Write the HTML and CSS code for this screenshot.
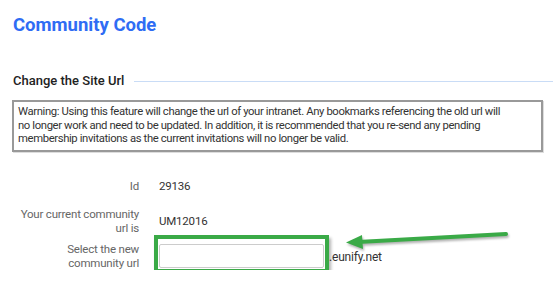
FILE: index.html
```html
<!DOCTYPE html>
<html lang="en">
<head>
    <meta charset="UTF-8">
    <meta name="viewport" content="width=device-width, initial-scale=1.0">
    <title>Community Code</title>
    <link rel="stylesheet" href="styles.css">
</head>
<body>
    <h1 class="page-title">Community Code</h1>

    <section class="site-url">
        <div class="section-head">
            <h2 class="section-title">Change the Site Url</h2>
            <span class="section-rule"></span>
        </div>

        <div class="warning-box">
            Warning: Using this feature will change the url of your intranet. Any bookmarks referencing the old url will<br>
            no longer work and need to be updated. In addition, it is recommended that you re-send any pending<br>
            membership invitations as the current invitations will no longer be valid.
        </div>

        <div class="url-form">
            <div class="form-label">Id</div>
            <div class="form-value">29136</div>

            <div class="form-label">Your current community url is</div>
            <div class="form-value">UM12016</div>

            <div class="form-label">Select the new community url</div>
            <div class="form-value input-row">
                <span class="input-wrap">
                    <input type="text" class="url-input">
                    <span class="highlight-box"></span>
                </span>
                <span class="domain">.eunify.net</span>
                <!-- annotation arrow -->
                <svg class="annotation-arrow" width="170" height="20" viewBox="0 0 170 20">
                    <line x1="14" y1="11" x2="162" y2="3" stroke="#3aaa47" stroke-width="4" stroke-linecap="round"/>
                    <polygon points="2,11.5 18,4 19,18" fill="#3aaa47"/>
                </svg>
            </div>
        </div>
    </section>
</body>
</html>
```

FILE: styles.css
```css
* {
    margin: 0;
    padding: 0;
    box-sizing: border-box;
}

body {
    font-family: Roboto, 'Noto Sans', sans-serif;
    background-color: #fff;
    color: #333;
    padding: 13px 10px 0 12px;
}

.page-title {
    font-size: 18.5px;
    font-weight: 700;
    color: #2f6cf4;
    line-height: 24px;
    padding-left: 1px;
}

.site-url {
    margin-top: 36px;
}

.section-head {
    display: flex;
    align-items: center;
    gap: 10px;
    padding-left: 1px;
    margin-right: -10px;
}

.section-title {
    font-size: 13px;
    font-weight: 500;
    color: #222;
    line-height: 16px;
}

.section-rule {
    flex: 1;
    height: 1px;
    background-color: #c9dcf6;
}

/* Warning panel */
.warning-box {
    margin-top: 11px;
    border: 2px solid #999;
    box-shadow: 1px 1px 0 #ddd;
    padding: 3px 2px 4px 4px;
    font-size: 11.3px;
    letter-spacing: -0.38px;
    line-height: 13.5px;
    color: #333;
    white-space: nowrap;
}

/* Form rows */
.url-form {
    display: grid;
    grid-template-columns: 127px 1fr;
    column-gap: 20px;
    row-gap: 7px;
    margin-top: 20px;
    align-items: center;
}

.form-label {
    font-size: 11.5px;
    letter-spacing: -0.2px;
    line-height: 14px;
    color: #666;
    text-align: right;
    padding-left: 8px;
}

.form-value {
    font-size: 11.5px;
    letter-spacing: -0.2px;
    color: #333;
    min-height: 28px;
    display: flex;
    align-items: center;
}

.input-row {
    position: relative;
}

.input-wrap {
    position: relative;
    display: inline-block;
}

.url-input {
    display: block;
    width: 165px;
    height: 24px;
    border: 1px solid #ccc;
    border-radius: 2px;
    background: #fff;
}

.highlight-box {
    position: absolute;
    left: -5px;
    right: -5px;
    top: -9px;
    bottom: -5px;
    border: 4px solid #3aaa47;
    box-shadow: 2px 3px 3px rgba(0, 0, 0, 0.3);
}

.domain {
    margin-left: 5px;
    padding-top: 3px;
    font-size: 12px;
}

.annotation-arrow {
    position: absolute;
    left: 185px;
    top: -11px;
    filter: drop-shadow(1px 2px 1px rgba(0, 0, 0, 0.3));
}
```
